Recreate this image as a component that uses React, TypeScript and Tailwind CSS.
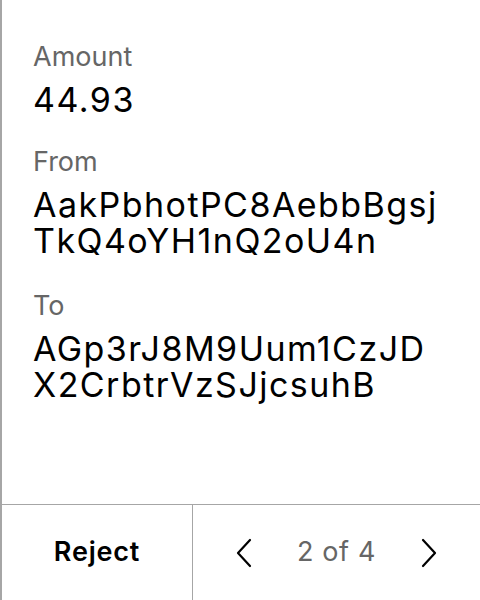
import React from "react";

function Chevron({ dir }: { dir: "left" | "right" }) {
  return (
    <svg width="18" height="30" viewBox="0 0 18 30" fill="none" stroke="#000" strokeWidth="2.2" strokeLinecap="round" strokeLinejoin="round">
      {dir === "left" ? <path d="M15 2 L3 15 L15 28" /> : <path d="M3 2 L15 15 L3 28" />}
    </svg>
  );
}

export default function App() {
  return (
    <div className="w-[480px] h-[600px] bg-white flex flex-col border-l-2 border-[#a6a6a6]" style={{ fontFamily: "Inter, 'Noto Sans', sans-serif" }}>
      <div className="flex-1 flex flex-col pl-[31px] pt-[41px]">
        <div className="text-[27px] leading-[32px] text-[#666666]">Amount</div>
        <div className="mt-[9px] text-[34px] leading-[36px] tracking-[1.5px] text-black">44.93</div>
        <div className="mt-[28px] text-[27px] leading-[32px] text-[#666666]">From</div>
        <div className="mt-[9px] text-[34px] leading-[36px] tracking-[1.45px] text-black">
          <div>AakPbhotPC8AebbBgsj</div>
          <div>TkQ4oYH1nQ2oU4n</div>
        </div>
        <div className="mt-[31px] text-[27px] leading-[32px] text-[#666666]">To</div>
        <div className="mt-[9px] text-[34px] leading-[36px] tracking-[1.45px] text-black">
          <div>AGp3rJ8M9Uum1CzJD</div>
          <div>X2CrbtrVzSJjcsuhB</div>
        </div>
      </div>
      <div className="h-[96px] border-t border-[#a6a6a6] flex">
        <div className="w-[191px] border-r border-[#a6a6a6] flex items-center justify-center">
          <span className="text-[27px] font-semibold tracking-[0.8px] text-black">Reject</span>
        </div>
        <div className="flex-1 flex items-center justify-center gap-[44px]">
          <Chevron dir="left" />
          <span className="text-[27px] tracking-[0.6px] text-[#666666]">2 of 4</span>
          <Chevron dir="right" />
        </div>
      </div>
    </div>
  );
}
